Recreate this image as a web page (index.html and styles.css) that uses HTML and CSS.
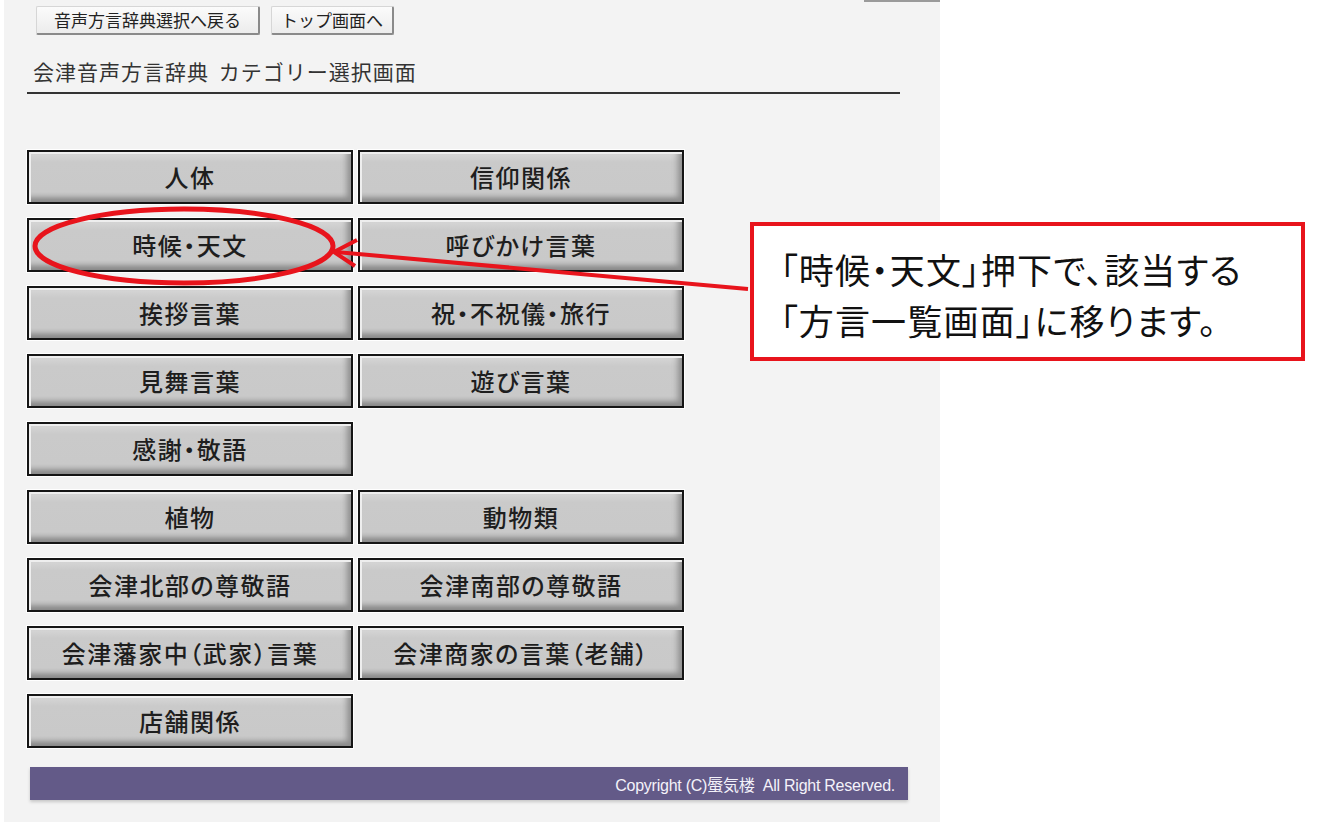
FILE: index.html
```html
<!DOCTYPE html>
<html lang="ja">
<head>
<meta charset="utf-8">
<title>会津音声方言辞典 カテゴリー選択画面</title>
<link rel="stylesheet" href="styles.css">
</head>
<body>
<div class="page">
  <div class="topedge"></div>
  <div class="topnav">
    <button class="navbtn">音声方言辞典選択へ戻る</button>
    <button class="navbtn">トップ画面へ</button>
  </div>
  <h1 class="title">会津音声方言辞典 カテゴリー選択画面</h1>
  <div class="grid">
    <button class="cat">人体</button>
    <button class="cat">信仰関係</button>
    <button class="cat">時候・天文</button>
    <button class="cat">呼びかけ言葉</button>
    <button class="cat">挨拶言葉</button>
    <button class="cat">祝・不祝儀・旅行</button>
    <button class="cat">見舞言葉</button>
    <button class="cat">遊び言葉</button>
    <button class="cat">感謝・敬語</button>
    <div class="empty"></div>
    <button class="cat">植物</button>
    <button class="cat">動物類</button>
    <button class="cat">会津北部の尊敬語</button>
    <button class="cat">会津南部の尊敬語</button>
    <button class="cat">会津藩家中（武家）言葉</button>
    <button class="cat">会津商家の言葉（老舗）</button>
    <button class="cat">店舗関係</button>
    <div class="empty"></div>
  </div>
  <div class="footer"><span class="copy">Copyright (C)蜃気楼&nbsp; All Right Reserved.</span></div>
</div>

<svg class="annot" width="1324" height="822" viewBox="0 0 1324 822">
  <ellipse cx="184" cy="246" rx="149" ry="37" fill="none" stroke="#e8141c" stroke-width="5"/>
  <line x1="748" y1="289" x2="336" y2="252" stroke="#e8141c" stroke-width="4"/>
  <polyline points="357,240 334,252 355,266" fill="none" stroke="#e8141c" stroke-width="4" stroke-linejoin="miter"/>
</svg>

<div class="callout">
  <div class="cline">「時候・天文」押下で、該当する</div>
  <div class="cline">「方言一覧画面」に移ります。</div>
</div>
</body>
</html>
```

FILE: styles.css
```css
html, body {
  margin: 0;
  padding: 0;
  background: #ffffff;
}
body {
  font-family: "Noto Sans CJK JP", "Liberation Sans", sans-serif;
  color: #222;
  width: 1324px;
  height: 822px;
  overflow: hidden;
  position: relative;
}
.page {
  position: relative;
  width: 913px;
  margin-left: 4px;
  height: 822px;
  background: #f3f3f3;
  padding: 6px 0 0 23px;
  box-sizing: content-box;
}
.topedge {
  position: absolute;
  left: 860px;
  top: 0;
  width: 76px;
  height: 2px;
  background: #9a9a9a;
}
.topnav {
  display: flex;
  gap: 11px;
  margin-left: 9px;
}
.navbtn {
  font-family: "Noto Sans CJK JP", sans-serif;
  font-size: 17px;
  color: #222;
  height: 29px;
  padding: 0;
  line-height: 26px;
  border: 1px solid #d6d6d6;
  border-right: 2px solid #8a8a8a;
  border-bottom: 2px solid #8a8a8a;
  background: linear-gradient(#fbfbfb, #ececec);
  border-radius: 2px;
  letter-spacing: 0;
}
.navbtn:first-child { width: 224px; }
.navbtn:last-child { width: 123px; }
.title {
  margin: 21px 0 0 0;
  width: 867px;
  padding: 0 0 6px 6px;
  font-size: 21px;
  font-weight: normal;
  line-height: 30px;
  color: #333;
  letter-spacing: 1px;
  word-spacing: 4px;
  border-bottom: 2px solid #333;
}
.grid {
  margin-top: 56px;
  display: grid;
  grid-template-columns: 326px 326px;
  grid-auto-rows: 54px;
  column-gap: 5px;
  row-gap: 14px;
}
.cat {
  font-family: "Noto Sans CJK JP", sans-serif;
  font-size: 24px;
  font-weight: 500;
  font-feature-settings: "palt";
  letter-spacing: 1.5px;
  color: #1e1e1e;
  border: 2px solid #151515;
  box-shadow: 0 0 0 1px #ffffff, inset 2px 2px 0 #eeeeee, inset -8px 0 6px -4px #8e8e8e, inset 0 -7px 5px -3px #888888;
  background: linear-gradient(#d8d8d8, #cacaca 20%, #c9c9c9 80%, #b4b4b4);
  padding: 0;
  margin: 0;
  line-height: 50px;
}
.footer {
  margin-top: 19px;
  margin-left: 3px;
  width: 878px;
  height: 33px;
  background: #635a88;
  box-shadow: 0 2px 3px rgba(0,0,0,0.18);
  display: flex;
  justify-content: flex-end;
  align-items: center;
  box-sizing: border-box;
  padding-right: 13px;
}
.copy {
  font-family: "Liberation Sans", "Noto Sans CJK JP", sans-serif;
  font-size: 16px;
  color: #f4f2fa;
  letter-spacing: -0.25px;
}
.annot {
  position: absolute;
  left: 0;
  top: 0;
  pointer-events: none;
}
.callout {
  position: absolute;
  left: 750px;
  top: 222px;
  width: 555px;
  height: 139px;
  box-sizing: border-box;
  border: 4px solid #e8141c;
  background: #ffffff;
  padding: 17px 0 0 26px;
  font-family: "Noto Sans CJK JP", sans-serif;
  font-size: 35px;
  font-weight: 400;
  font-feature-settings: "palt";
  color: #111;
  letter-spacing: 1.2px;
}
.cline {
  line-height: 51px;
  height: 51px;
}
```
